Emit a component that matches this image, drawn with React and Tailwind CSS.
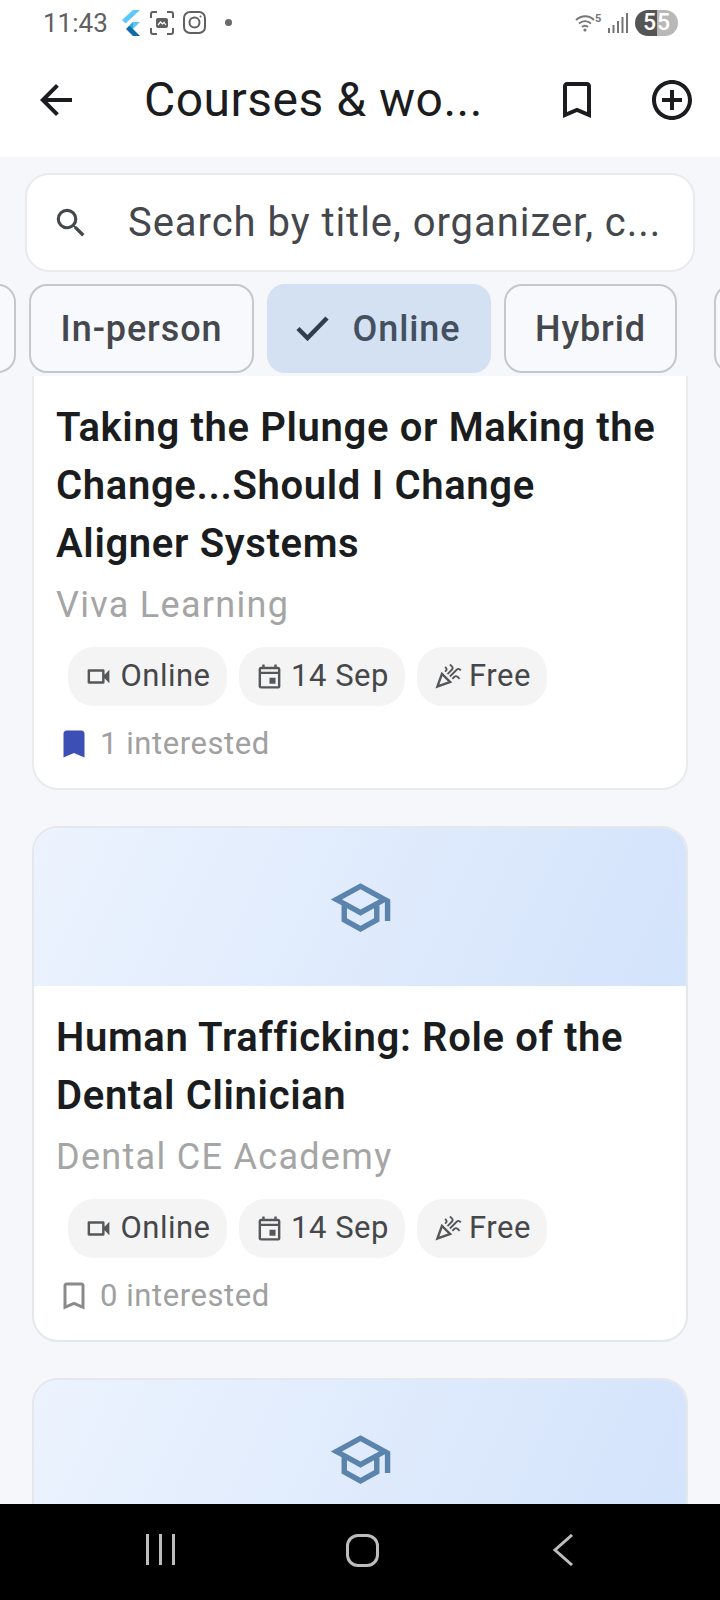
import { MdArrowBack, MdBookmark, MdBookmarkBorder, MdAddCircleOutline, MdSearch, MdOutlineVideocam, MdOutlineEvent, MdOutlineCelebration, MdOutlineSchool } from "react-icons/md";

function FlutterLogo() {
  return (
    <svg width="21" height="26" viewBox="0 0 21 26">
      <path d="M13 0h7L5.500 13.500 2 10z" fill="#5cc8f8" />
      <path d="M13 12h7l-7 7-3.500-3.500z" fill="#5cc8f8" />
      <path d="M9.500 15.500L13 12l0 7z" fill="#35a5e0" />
      <path d="M9.500 15.500L13 19l7 7h-7l-7-7z" fill="#0f6aa8" />
    </svg>
  );
}

function ScanIcon() {
  return (
    <svg width="24" height="24" viewBox="0 0 24 24" fill="none" stroke="#606060" strokeWidth="2">
      <path d="M1 7V3a2 2 0 0 1 2-2h4M17 1h4a2 2 0 0 1 2 2v4M23 17v4a2 2 0 0 1-2 2h-4M7 23H3a2 2 0 0 1-2-2v-4" />
      <rect x="6" y="7" width="12" height="10" rx="2" fill="#606060" stroke="none" />
      <path d="M8 14l2.500-3 2 2 1.500-1.500L16 14" stroke="#fff" strokeWidth="1.200" />
    </svg>
  );
}

function InstagramIcon() {
  return (
    <svg width="23" height="23" viewBox="0 0 23 23" fill="none" stroke="#606060" strokeWidth="2">
      <rect x="1" y="1" width="21" height="21" rx="6" />
      <circle cx="11.500" cy="11.500" r="5" />
      <circle cx="17.500" cy="5.500" r="1" fill="#606060" stroke="none" />
    </svg>
  );
}

function WifiIcon() {
  return (
    <svg width="27" height="19" viewBox="0 0 27 19" fill="none" stroke="#757575" strokeWidth="1.800">
      <path d="M1 7c5.500-5 13-5 18 0M4 10.500c3.500-3.200 8.500-3.200 12 0M7 14c2-1.700 4-1.700 6 0" />
      <circle cx="10" cy="17" r="1.600" fill="#757575" stroke="none" />
      <text x="20" y="9" fontSize="11" fontWeight="700" fill="#757575" stroke="none" fontFamily="Roboto, sans-serif">5</text>
    </svg>
  );
}

function SignalIcon() {
  return (
    <svg width="20" height="20" viewBox="0 0 20 20" fill="#757575">
      <rect x="0" y="15" width="2" height="5" />
      <rect x="4.500" y="12" width="2" height="8" />
      <rect x="9" y="8" width="2" height="12" />
      <rect x="13.500" y="4" width="2" height="16" />
      <rect x="18" y="0" width="2" height="20" />
    </svg>
  );
}

function CheckMark() {
  return (
    <svg className="mr-[24px]" width="33" height="25" viewBox="0 0 33 25" fill="none" stroke="#2f3d4e" strokeWidth="4.500">
      <path d="M2 12.500l9.500 9.500L31 2" />
    </svg>
  );
}

function StatusBar() {
  return (
    <div className="flex h-[45px] shrink-0 items-center bg-white pl-[43px] pr-[42px]">
      <span className="text-[26px] leading-none text-[#606060]">11:43</span>
      <div className="ml-[12px]"><FlutterLogo /></div>
      <div className="ml-[9px]"><ScanIcon /></div>
      <div className="ml-[9px]"><InstagramIcon /></div>
      <div className="ml-[19px] h-[7px] w-[7px] rounded-full bg-[#6a6a6a]" />
      <div className="ml-auto"><WifiIcon /></div>
      <div className="ml-[6px]"><SignalIcon /></div>
      <div className="ml-[7px] flex h-[26px] w-[43px] overflow-hidden rounded-full text-[23px] font-medium leading-[26px] text-white">
        <span className="w-[22px] bg-[#555555] pr-px text-right">5</span>
        <span className="w-[21px] bg-[#b8b8b8] text-left">5</span>
      </div>
    </div>
  );
}

function AppBar() {
  return (
    <div className="flex h-[112px] shrink-0 items-center bg-white pb-[2px]">
      <MdArrowBack className="ml-[32px] text-[#1a1c20]" size={48} />
      <h1 className="ml-[64px] text-[48px] font-normal leading-none tracking-[0.5px] text-[#1a1c20]">Courses &amp; wo...</h1>
      <MdBookmarkBorder className="ml-auto text-[#1a1c20]" size={48} />
      <MdAddCircleOutline className="ml-[47px] mr-[24px] text-[#1a1c20]" size={48} />
    </div>
  );
}

function SearchBox() {
  return (
    <div className="mx-[25px] mt-[16px] flex h-[99px] items-center rounded-[24px] border-2 border-[#e8eaed] bg-white">
      <MdSearch className="ml-[25px] text-[#44474c]" size={38} />
      <span className="ml-[38px] text-[40px] leading-none tracking-[0.95px] text-[#44474c]">Search by title, organizer, c...</span>
    </div>
  );
}

function FilterChip({ label, width, selected }) {
  if (selected) {
    return (
      <div style={{ width }} className="flex h-[89px] shrink-0 items-center justify-center rounded-[18px] bg-[#d3e1f3] pr-[2px] text-[36px] font-medium tracking-[0.9px] text-[#44505f]">
        <CheckMark />
        {label}
      </div>
    );
  }
  return (
    <div style={{ width }} className="flex h-[89px] shrink-0 items-center justify-center rounded-[18px] border-2 border-[#c4c7cb] bg-[#f8f9fd] text-[36px] font-medium tracking-[0.9px] text-[#44474c]">
      {label}
    </div>
  );
}

function FilterRow() {
  return (
    <div className="mt-[12px] flex gap-[13px] overflow-hidden">
      <div className="-ml-[84px] h-[89px] w-[100px] shrink-0 rounded-[18px] border-2 border-[#c4c7cb] bg-[#f8f9fd]" />
      <FilterChip label="In-person" width={225} />
      <FilterChip label="Online" width={224} selected />
      <FilterChip label="Hybrid" width={173} />
      <div className="ml-[24px] h-[89px] w-[100px] shrink-0 rounded-[18px] border-2 border-[#c4c7cb] bg-[#f8f9fd]" />
    </div>
  );
}

function InfoPill({ icon: Icon, label, width }) {
  return (
    <div style={{ width }} className="flex h-[59px] items-center justify-center gap-[7px] rounded-[26px] bg-[#f4f4f4] text-[31px] tracking-[0.5px] text-[#45474a]">
      <Icon className="text-[#55575a]" size={29} />
      {label}
    </div>
  );
}

function CourseBanner() {
  return (
    <div className="flex h-[158px] items-center justify-center bg-[linear-gradient(115deg,#ecf3fe,#d3e3fb)]">
      <MdOutlineSchool className="text-[#5b84ad]" size={65} />
    </div>
  );
}

function CourseBody({ title, organizer, interested, saved }) {
  return (
    <div className="px-[22px] pb-[26px] pt-[23px]">
      <h2 className="text-[40px] font-semibold leading-[58px] tracking-[0.65px] text-[#1a1c1e]">
        {title.map((line) => <div key={line}>{line}</div>)}
      </h2>
      <p className="mt-[10px] text-[36px] leading-[44px] tracking-[1.3px] text-[#a5a5a5]">{organizer}</p>
      <div className="ml-[12px] mt-[20px] flex gap-[12px]">
        <InfoPill icon={MdOutlineVideocam} label="Online" width={159} />
        <InfoPill icon={MdOutlineEvent} label="14 Sep" width={166} />
        <InfoPill icon={MdOutlineCelebration} label="Free" width={130} />
      </div>
      <div className="ml-[2px] mt-[20px] flex items-center gap-[8px] text-[31px] leading-[36px] tracking-[0.55px] text-[#a0a0a0]">
        {saved
          ? <MdBookmark className="-ml-[2px] text-[#3b4fb5]" size={36} />
          : <MdBookmarkBorder className="-ml-[2px] text-[#8a8a8a]" size={36} />}
        {interested} interested
      </div>
    </div>
  );
}

function NavBar() {
  return (
    <div className="flex h-[96px] shrink-0 items-start bg-black pt-[30px]">
      <div className="ml-[146px] flex h-[31px] gap-[10px]">
        <div className="w-[3px] bg-[#bdbdbd]" />
        <div className="w-[3px] bg-[#bdbdbd]" />
        <div className="w-[3px] bg-[#bdbdbd]" />
      </div>
      <div className="ml-[171px] h-[33px] w-[33px] rounded-[12px] border-[3px] border-[#bdbdbd]" />
      <svg className="ml-[173px]" width="22" height="32" viewBox="0 0 22 32" fill="none" stroke="#bdbdbd" strokeWidth="3">
        <path d="M20 1L3 16l17 15" />
      </svg>
    </div>
  );
}

export default function App() {
  return (
    <div className="flex h-[1600px] w-[720px] flex-col overflow-hidden bg-[#f5f7fa] font-['Roboto',sans-serif]">
      <StatusBar />
      <AppBar />
      <SearchBox />
      <FilterRow />
      <div className="mt-[3px] min-h-0 flex-1 overflow-hidden">
        {/* first card is scrolled so its banner sits under the filters */}
        <div className="mx-[32px] rounded-b-[26px] border-x-2 border-b-2 border-[#e8eaed] bg-white">
          <CourseBody
            title={["Taking the Plunge or Making the", "Change...Should I Change", "Aligner Systems"]}
            organizer="Viva Learning"
            interested={1}
            saved
          />
        </div>
        <div className="mx-[32px] mt-[36px] overflow-hidden rounded-[26px] border-2 border-[#e4e7eb] bg-white">
          <CourseBanner />
          <CourseBody
            title={["Human Trafficking: Role of the", "Dental Clinician"]}
            organizer="Dental CE Academy"
            interested={0}
          />
        </div>
        <div className="mx-[32px] mt-[36px] overflow-hidden rounded-[26px] border-2 border-[#e4e7eb] bg-white">
          <CourseBanner />
        </div>
      </div>
      <NavBar />
    </div>
  );
}
